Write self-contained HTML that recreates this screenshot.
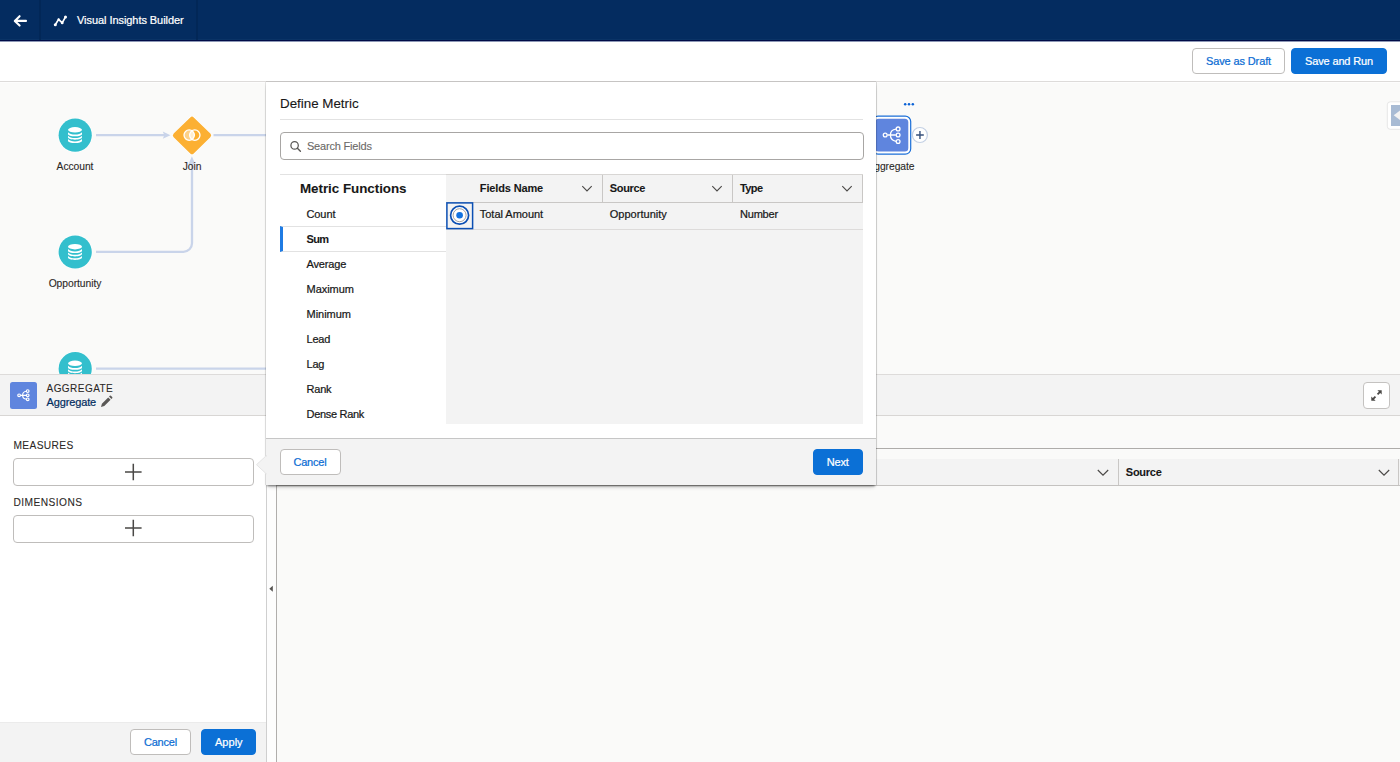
<!DOCTYPE html>
<html lang="en">
<head>
<meta charset="utf-8">
<title>Visual Insights Builder</title>
<style>
*{box-sizing:border-box;margin:0;padding:0}
body{-webkit-text-stroke:0.22px currentColor}
html,body{width:1400px;height:762px;overflow:hidden;background:#fafaf9;font-family:"Liberation Sans",Arial,sans-serif;font-size:11px;color:#181818}
.abs{position:absolute}
.t{position:absolute;white-space:nowrap;font-size:11px;line-height:14px;letter-spacing:-0.1px;color:#181818}
.b{font-weight:bold;letter-spacing:-0.25px;-webkit-text-stroke:0.08px currentColor}
.caps{font-size:10.2px;line-height:12px;letter-spacing:0.36px;color:#2b2826;-webkit-text-stroke:0.08px currentColor}
#hdr{left:0;top:0;width:1400px;height:42px;background:#042c60;border-bottom:1px solid #8d98b6;box-shadow:inset 0 -1px 0 #010c47,inset 0 -2px 0 #0a3366}
#hdr .sep{position:absolute;top:0;width:2px;height:40px;background:#022755;opacity:.8}
#tool{left:0;top:42px;width:1400px;height:40px;background:#fff;border-bottom:1px solid #dddbda}
.btn{position:absolute;height:26px;border-radius:4px;font-size:11px;letter-spacing:-0.12px;line-height:24px;text-align:center;border:1px solid #bfbdbb;background:#fff;color:#0b6cd3;white-space:nowrap}
.btn.brand{background:#0b70d6;border-color:#0b70d6;color:#fff}
#canvas{left:0;top:82px;width:1400px;height:293px;background:#fafaf9;overflow:hidden;box-shadow:inset 0 1px 0 #fdfdfd}
.nlabel{-webkit-text-stroke:0.1px currentColor;position:absolute;font-size:10.3px;line-height:13px;letter-spacing:-0.05px;color:#2b2826;text-align:center;width:100px;white-space:nowrap}
#bph{left:0;top:374px;width:1400px;height:42px;background:#f3f3f3;border-top:1px solid #dddbda;border-bottom:1px solid #d8d6d4}
#left{left:0;top:416px;width:266px;height:346px;background:#fff}
#lfoot{left:0;top:722px;width:266px;height:40px;background:#f3f3f3;border-top:1px solid #ebebeb}
.addbox{position:absolute;left:13px;width:241px;height:28px;border:1px solid #bfbdbb;border-radius:4px;background:#fff}
#split{left:266px;top:416px;width:11px;height:346px;background:#fdfdfd;border-left:1px solid #cfcfcf;border-right:1px solid #b0aeac}
#right{left:277px;top:416px;width:1123px;height:346px;background:#fafaf9}
#modal{left:266px;top:82px;width:610px;height:403px;background:#fff;box-shadow:0 2px 2px -1px rgba(0,0,0,.5),0 4px 4px -2px rgba(0,0,0,.18),-1px 0 0 rgba(0,0,0,.09),1px 0 0 rgba(0,0,0,.13),0 -1px 0 rgba(0,0,0,.10)}
</style>
</head>
<body>
<!-- header -->
<div id="hdr" class="abs">
  <div class="sep" style="left:39px"></div>
  <div class="sep" style="left:196px"></div>
  <svg class="abs" style="left:10px;top:11px" width="20" height="20" viewBox="10 11 20 20"><path d="M26 20.900H15M19.600 16.200L14.800 20.900l4.800 4.700" fill="none" stroke="#fff" stroke-width="2.100" stroke-linecap="round" stroke-linejoin="round"/></svg>
  <svg class="abs" style="left:50px;top:11px" width="20" height="20" viewBox="50 11 20 20"><path d="M55.300 24.700l3.300-5.300 3.600 3.500 3.200-5.700" fill="none" stroke="#fff" stroke-width="1.700" stroke-linecap="round" stroke-linejoin="round"/><circle cx="55.300" cy="24.700" r="1.500" fill="#fff"/><circle cx="58.600" cy="19.400" r="1.100" fill="#fff"/><circle cx="62.200" cy="22.900" r="1.400" fill="#fff"/><circle cx="65.500" cy="17.100" r="1.500" fill="#fff"/></svg>
  <div class="t" style="left:77px;top:13.400px;color:#fff;letter-spacing:-0.06px">Visual Insights Builder</div>
</div>
<!-- toolbar -->
<div id="tool" class="abs">
  <div class="btn" style="left:1192px;top:6px;width:93px">Save as Draft</div>
  <div class="btn brand" style="left:1291px;top:6px;width:96px;letter-spacing:-0.16px">Save and Run</div>
</div>
<!-- canvas -->
<div id="canvas" class="abs">
  <svg class="abs" style="left:0;top:0" width="1400" height="293" viewBox="0 82 1400 293">
    <g fill="none" stroke="#c9d4ea" stroke-width="2.300">
      <path d="M96 135.200H165"/>
      <path d="M213.500 135.200H270"/>
      <path d="M96 251.800H183.500a8.500 8.500 0 0 0 8.500-8.500V164"/>
      <path d="M96 368.700H270"/>
    </g>
    <path d="M162.800 131.600l7.700 3.600-7.700 3.600 1.500-3.600z" fill="#c9d4ea"/>
    <path d="M188.200 165l3.700-8.700 3.700 8.700-3.700-1.600z" fill="#c9d4ea"/>
    <!-- source nodes -->
    <g>
      <circle cx="75.200" cy="135.200" r="17.300" fill="#fff" opacity=".8"/>
      <circle cx="75.200" cy="135.200" r="16.600" fill="#33bfcd"/>
      <g fill="#fff">
        <ellipse cx="75" cy="129.850" rx="7" ry="2.750"/>
        <path d="M68 132.300c1.200 1.700 4 2.300 7 2.300s5.800-.6 7-2.300v1.600c0 1.300-3.100 2.400-7 2.400s-7-1.100-7-2.400z"/>
        <path d="M68 135.700c1.200 1.700 4 2.300 7 2.300s5.800-.6 7-2.300v1.600c0 1.300-3.100 2.400-7 2.400s-7-1.100-7-2.400z"/>
        <path d="M68 139.100c1.200 1.700 4 2.300 7 2.300s5.800-.6 7-2.300v1.600c0 1.300-3.100 2.400-7 2.400s-7-1.100-7-2.400z"/>
      </g>
    </g>
    <g transform="translate(0 116.800)">
      <circle cx="75.200" cy="135.200" r="17.300" fill="#fff" opacity=".8"/>
      <circle cx="75.200" cy="135.200" r="16.600" fill="#33bfcd"/>
      <g fill="#fff">
        <ellipse cx="75" cy="129.850" rx="7" ry="2.750"/>
        <path d="M68 132.300c1.200 1.700 4 2.300 7 2.300s5.800-.6 7-2.300v1.600c0 1.300-3.100 2.400-7 2.400s-7-1.100-7-2.400z"/>
        <path d="M68 135.700c1.200 1.700 4 2.300 7 2.300s5.800-.6 7-2.300v1.600c0 1.300-3.100 2.400-7 2.400s-7-1.100-7-2.400z"/>
        <path d="M68 139.100c1.200 1.700 4 2.300 7 2.300s5.800-.6 7-2.300v1.600c0 1.300-3.100 2.400-7 2.400s-7-1.100-7-2.400z"/>
      </g>
    </g>
    <g transform="translate(0 233.500)">
      <circle cx="75.200" cy="135.200" r="17.300" fill="#fff" opacity=".8"/>
      <circle cx="75.200" cy="135.200" r="16.600" fill="#33bfcd"/>
      <g fill="#fff">
        <ellipse cx="75" cy="129.850" rx="7" ry="2.750"/>
        <path d="M68 132.300c1.200 1.700 4 2.300 7 2.300s5.800-.6 7-2.300v1.600c0 1.300-3.100 2.400-7 2.400s-7-1.100-7-2.400z"/>
        <path d="M68 135.700c1.200 1.700 4 2.300 7 2.300s5.800-.6 7-2.300v1.600c0 1.300-3.100 2.400-7 2.400s-7-1.100-7-2.400z"/>
        <path d="M68 139.100c1.200 1.700 4 2.300 7 2.300s5.800-.6 7-2.300v1.600c0 1.300-3.100 2.400-7 2.400s-7-1.100-7-2.400z"/>
      </g>
    </g>
    <!-- join -->
    <path d="M175.400 135.400L192 119.200 208.600 135.400 192 151.600z" fill="#fff" stroke="#fff" stroke-width="6.400" stroke-linejoin="round" opacity=".8"/>
    <path d="M175.400 135.400L192 119.200 208.600 135.400 192 151.600z" fill="#fcb033" stroke="#fcb033" stroke-width="5" stroke-linejoin="round"/>
    <circle cx="189.200" cy="135.100" r="5.200" fill="#fff" fill-opacity=".42" stroke="#fff" stroke-width="1.300"/>
    <circle cx="194.800" cy="135.100" r="5.200" fill="none" stroke="#fff" stroke-width="1.300"/>
    <path d="M192 130.700a5.200 5.200 0 0 1 0 8.800a5.200 5.200 0 0 1 0-8.800z" fill="#fff" fill-opacity=".6"/>
    <!-- aggregate -->
    <rect x="872.600" y="116.100" width="38.100" height="38.100" rx="5.500" fill="#fff" stroke="#1b6fd8" stroke-width="1.200"/>
    <rect x="875.200" y="118.800" width="33.100" height="32.800" rx="3.500" fill="#5f85de"/>
    <g fill="none" stroke="#fff" stroke-width="1.300">
      <path d="M887.400 135h8.400M896 129.100c-3.700.4-5.600 2.900-5.600 5.900s1.900 5.500 5.600 6.300"/>
    </g>
    <g fill="#5f85de" stroke="#fff" stroke-width="1.300">
      <circle cx="885.200" cy="135" r="1.900"/><circle cx="898.100" cy="128.900" r="1.900"/><circle cx="898.100" cy="135" r="1.900"/><circle cx="898.100" cy="141.500" r="1.900"/>
    </g>
    <circle cx="919.900" cy="135" r="7.500" fill="#fff" stroke="#c3d0e4" stroke-width="1.200"/>
    <path d="M916.100 135h7.700M919.950 131.100v7.800" stroke="#36507c" stroke-width="1.400" fill="none"/>
    <g fill="#0b62d6"><circle cx="905.200" cy="104.300" r="1.250"/><circle cx="909" cy="104.300" r="1.250"/><circle cx="912.800" cy="104.300" r="1.250"/></g>
    <!-- right edge widget -->
    <rect x="1387.300" y="101.800" width="20" height="27.500" rx="3" fill="#fff" stroke="#e6e6e6" stroke-width="1"/>
    <rect x="1391" y="105" width="12" height="21" fill="#a8bbd4"/>
    <path d="M1400 110.500v9.500l-6.300-4.700z" fill="#f2f2f2"/>
  </svg>
  <div class="nlabel" style="left:25px;top:77.500px">Account</div>
  <div class="nlabel" style="left:142px;top:77.500px">Join</div>
  <div class="nlabel" style="left:25px;top:194.500px">Opportunity</div>
  <div class="nlabel" style="left:841px;top:77.500px">Aggregate</div>
</div>
<!-- bottom panel header -->
<div id="bph" class="abs">
  <div class="abs" style="left:10px;top:7px;width:27px;height:26.500px;border-radius:2.500px;background:#5f85de"></div>
  <svg class="abs" style="left:14px;top:10px" width="20" height="20" viewBox="0 0 20 20">
    <g fill="none" stroke="#fff" stroke-width="1.150"><path d="M6.400 10.300h5.900M12.400 6.300c-2.600.3-3.800 1.900-3.800 4s1.200 3.700 3.800 4"/></g>
    <g fill="#5f85de" stroke="#fff" stroke-width="1.150"><circle cx="5.100" cy="10.300" r="1.350"/><circle cx="13.700" cy="6.100" r="1.350"/><circle cx="13.700" cy="10.300" r="1.350"/><circle cx="13.700" cy="14.300" r="1.350"/></g>
  </svg>
  <div class="t caps" style="left:46.500px;top:8.400px;font-size:10px;letter-spacing:.46px">AGGREGATE</div>
  <div class="t" style="left:46.500px;top:20px;color:#032d60;letter-spacing:-0.13px">Aggregate</div>
  <svg class="abs" style="left:100px;top:20px" width="13" height="13" viewBox="0 0 13 13"><path d="M1 12l.9-3.300 6.300-6.300 2.400 2.400-6.300 6.300zM9 1.600l.8-.8a.8.800 0 0 1 1.100 0l1.300 1.300a.8.800 0 0 1 0 1.100l-.8.800z" fill="#5a5856"/></svg>
  <div class="abs" style="left:1363px;top:7px;width:27px;height:27px;border:1px solid #c4c2c0;border-radius:4px;background:#fff"></div>
  <svg class="abs" style="left:1370px;top:14px" width="13" height="13" viewBox="0 0 13 13"><g fill="#4a4846"><path d="M7.400 1.300h4.300v4.300l-1.500-1.500-2 2-1.300-1.300 2-2z"/><path d="M5.600 11.700H1.300V7.400l1.500 1.500 2-2 1.300 1.300-2 2z"/></g></svg>
</div>
<!-- left panel -->
<div id="left" class="abs"></div>
<div class="t caps" style="left:13.500px;top:439.700px">MEASURES</div>
<div class="addbox" style="top:457.500px"></div>
<div class="t caps" style="left:13.500px;top:496.500px;letter-spacing:.45px">DIMENSIONS</div>
<div class="addbox" style="top:514.500px"></div>
<svg class="abs" style="left:123px;top:461.800px" width="20" height="20" viewBox="0 0 20 20"><path d="M2 10h16.600M10.300 1.700v16.600" stroke="#4a4846" stroke-width="1.500" fill="none"/></svg>
<svg class="abs" style="left:123px;top:518.300px" width="20" height="20" viewBox="0 0 20 20"><path d="M2 10h16.600M10.300 1.700v16.600" stroke="#4a4846" stroke-width="1.500" fill="none"/></svg>
<div id="lfoot" class="abs">
  <div class="btn" style="left:130px;top:6.400px;width:61px;letter-spacing:-0.19px">Cancel</div>
  <div class="btn brand" style="left:201.300px;top:6.400px;width:55px;letter-spacing:0.05px">Apply</div>
</div>
<div id="split" class="abs"></div>
<svg class="abs" style="left:268px;top:584px" width="6" height="10" viewBox="0 0 6 10"><path d="M4.800 1.800v6L1.300 4.800z" fill="#555351"/></svg>
<!-- right grid -->
<div id="right" class="abs">
  <div class="abs" style="left:0;top:32px;width:1123px;height:1px;background:#aeacaa"></div>
  <div class="abs" style="left:0;top:43px;width:1123px;height:27px;background:#f3f3f3;border-bottom:1px solid #c4c2c0"></div>
  <div class="abs" style="left:841px;top:43px;width:1px;height:26px;background:#c9c7c5"></div>
  <div class="abs" style="left:1121px;top:43px;width:1px;height:26px;background:#c9c7c5"></div>
  <div class="t b" style="left:848.800px;top:49.300px">Source</div>
  <svg class="abs" style="left:820px;top:53px" width="12" height="8" viewBox="0 0 12 8"><path d="M.8 1l5.200 5.200L11.200 1" fill="none" stroke="#4a4846" stroke-width="1.150"/></svg>
  <svg class="abs" style="left:1100.500px;top:53px" width="12" height="8" viewBox="0 0 12 8"><path d="M.8 1l5.200 5.200L11.200 1" fill="none" stroke="#4a4846" stroke-width="1.150"/></svg>
</div>
<!-- modal -->
<div id="modal" class="abs">
  <div class="t" style="left:14px;top:12.750px;font-size:13.400px;line-height:18px;letter-spacing:-0.02px;-webkit-text-stroke:0.1px currentColor">Define Metric</div>
  <div class="abs" style="left:14px;top:37px;width:583px;height:1px;background:#e2e2e2"></div>
  <div class="abs" style="left:13.500px;top:50px;width:584px;height:27.500px;border:1px solid #a8a6a4;border-radius:4px;background:#fff"></div>
  <svg class="abs" style="left:23px;top:58px" width="13" height="13" viewBox="0 0 13 13"><circle cx="5.600" cy="5.400" r="3.700" fill="none" stroke="#5a5856" stroke-width="1.250"/><path d="M8.400 8.200l3 3" stroke="#5a5856" stroke-width="1.400" stroke-linecap="round"/></svg>
  <div class="t" style="left:40.900px;top:56.700px;color:#6b6967;letter-spacing:-0.18px;-webkit-text-stroke:0.1px currentColor">Search Fields</div>
  <div class="abs" style="left:14px;top:92px;width:583px;height:1px;background:#e2e2e2"></div>
  <div class="t b" style="left:34px;top:97.700px;font-size:13.400px;line-height:18px;letter-spacing:-0.04px">Metric Functions</div>
  <div class="t" style="left:40.500px;top:125.200px">Count</div>
  <div class="abs" style="left:14px;top:144px;width:166px;height:26px;border-top:1px solid #e2e2e2;border-bottom:1px solid #e2e2e2;border-left:3px solid #1f7be3"></div>
  <div class="t b" style="left:40.500px;top:150.200px;letter-spacing:-0.6px">Sum</div>
  <div class="t" style="left:40.500px;top:175.200px;letter-spacing:-0.16px">Average</div>
  <div class="t" style="left:40.500px;top:200.300px;letter-spacing:-0.03px">Maximum</div>
  <div class="t" style="left:40.500px;top:225.100px;letter-spacing:-0.02px">Minimum</div>
  <div class="t" style="left:40.500px;top:250.100px;letter-spacing:-0.19px">Lead</div>
  <div class="t" style="left:40.500px;top:275.100px;letter-spacing:-0.19px">Lag</div>
  <div class="t" style="left:40.500px;top:300.100px;letter-spacing:-0.19px">Rank</div>
  <div class="t" style="left:40.500px;top:325.400px;letter-spacing:-0.3px">Dense Rank</div>
  <!-- table -->
  <div class="abs" style="left:180px;top:92px;width:417px;height:250px;background:#f3f3f3">
    <div class="abs" style="left:0;top:0;width:417px;height:28.500px;border-top:1px solid #d8d6d4;border-bottom:1px solid #c9c7c5"></div>
    <div class="abs" style="left:0;top:55px;width:417px;height:1px;background:#dddbda"></div>
    <div class="abs" style="left:156px;top:1px;width:1px;height:27px;background:#c9c7c5"></div>
    <div class="abs" style="left:286px;top:1px;width:1px;height:27px;background:#c9c7c5"></div>
    <div class="abs" style="left:416px;top:1px;width:1px;height:27px;background:#c9c7c5"></div>
    <div class="t b" style="left:33.800px;top:6.900px;letter-spacing:-0.14px">Fields Name</div>
    <div class="t b" style="left:163.700px;top:6.900px;letter-spacing:-0.3px">Source</div>
    <div class="t b" style="left:294px;top:6.900px;letter-spacing:-0.58px">Type</div>
    <svg class="abs" style="left:135px;top:11.200px" width="12" height="8" viewBox="0 0 12 8"><path d="M1.300 1.200l4.700 4.700L10.700 1.200" fill="none" stroke="#4a4846" stroke-width="1.100"/></svg>
    <svg class="abs" style="left:264.600px;top:11.200px" width="12" height="8" viewBox="0 0 12 8"><path d="M1.300 1.200l4.700 4.700L10.700 1.200" fill="none" stroke="#4a4846" stroke-width="1.100"/></svg>
    <svg class="abs" style="left:394.600px;top:11.200px" width="12" height="8" viewBox="0 0 12 8"><path d="M1.300 1.200l4.700 4.700L10.700 1.200" fill="none" stroke="#4a4846" stroke-width="1.100"/></svg>
    <svg class="abs" style="left:0;top:28px" width="28" height="28" viewBox="0 0 28 28">
      <rect x=".9" y=".9" width="25.700" height="25.700" fill="#f3f3f3" stroke="#0b4fb3" stroke-width="1.500"/>
      <circle cx="13.600" cy="13.200" r="9" fill="#fff" stroke="#0b4fb3" stroke-width="1.700"/>
      <circle cx="13.600" cy="13.200" r="6.500" fill="#fff" stroke="#8e8c8a" stroke-width=".8"/>
      <circle cx="13.600" cy="13.200" r="3.300" fill="#1272e0"/>
    </svg>
    <div class="t" style="left:33.800px;top:33.100px;letter-spacing:-0.02px">Total Amount</div>
    <div class="t" style="left:163.700px;top:33.100px;letter-spacing:0.03px">Opportunity</div>
    <div class="t" style="left:294px;top:33.100px;letter-spacing:-0.2px">Number</div>
  </div>
  <!-- footer -->
  <div class="abs" style="left:0;top:355.500px;width:610px;height:47.500px;background:#f3f3f3;border-top:1px solid #c6c6c6"></div>
  <div class="btn" style="left:13.500px;top:366.800px;width:61px;letter-spacing:-0.19px">Cancel</div>
  <div class="btn brand" style="left:546.500px;top:366.800px;width:50.500px">Next</div>
</div>
<!-- nubbin -->
<svg class="abs" style="left:255px;top:454px" width="12" height="22" viewBox="0 0 12 22"><path d="M11.500 1.500L1.500 10.700l10 9.300z" fill="#f3f3f3" stroke="#e4e4e4" stroke-width="1"/><path d="M11.500 2.500v17" stroke="#f3f3f3" stroke-width="1.500"/></svg>
</body>
</html>
